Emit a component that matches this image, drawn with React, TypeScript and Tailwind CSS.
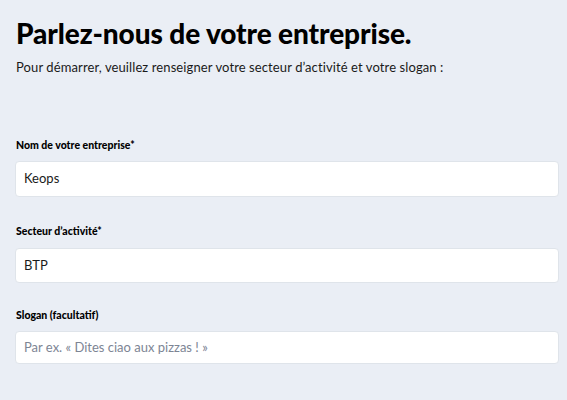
export default function App() {
  const font = { fontFamily: "Lato, 'Noto Sans', sans-serif" };
  return (
    <div className="w-[567px] h-[400px] bg-[#eaeef5] text-[#111] overflow-hidden" style={font}>
      <div className="pl-[16px] pt-[16px]">
        <h1 className="text-[28px] leading-[34px] font-black tracking-[-0.1px] text-black">
          Parlez-nous de votre entreprise.
        </h1>
        <p className="mt-[8px] text-[13px] leading-[18px] tracking-[0.1px] text-[#1a1a1a]">
          Pour démarrer, veuillez renseigner votre secteur d’activité et votre slogan :
        </p>
      </div>

      <div className="pl-[15px] pr-[8px] mt-[62px] flex flex-col">
        <label className="pl-[1px] text-[10.5px] leading-[14px] font-black text-black">
          Nom de votre entreprise*
        </label>
        <div className="mt-[9px] h-[36px] rounded-[4px] border border-[#dfe4ea] bg-white flex items-center px-[8px] text-[13px] text-[#1a1a1a]">
          Keops
        </div>

        <label className="mt-[27px] pl-[1px] text-[10.5px] leading-[14px] font-black text-black">
          Secteur d’activité*
        </label>
        <div className="mt-[10px] h-[35px] rounded-[4px] border border-[#dfe4ea] bg-white flex items-center px-[8px] text-[13px] text-[#1a1a1a]">
          BTP
        </div>

        <label className="mt-[25px] pl-[1px] text-[10.5px] leading-[14px] font-black text-black">
          Slogan (facultatif)
        </label>
        <div className="mt-[9px] h-[33px] rounded-[4px] border border-[#dfe4ea] bg-white flex items-center px-[8px] text-[13px] text-[#7d8594]">
          Par ex. « Dites ciao aux pizzas ! »
        </div>
      </div>
    </div>
  );
}
